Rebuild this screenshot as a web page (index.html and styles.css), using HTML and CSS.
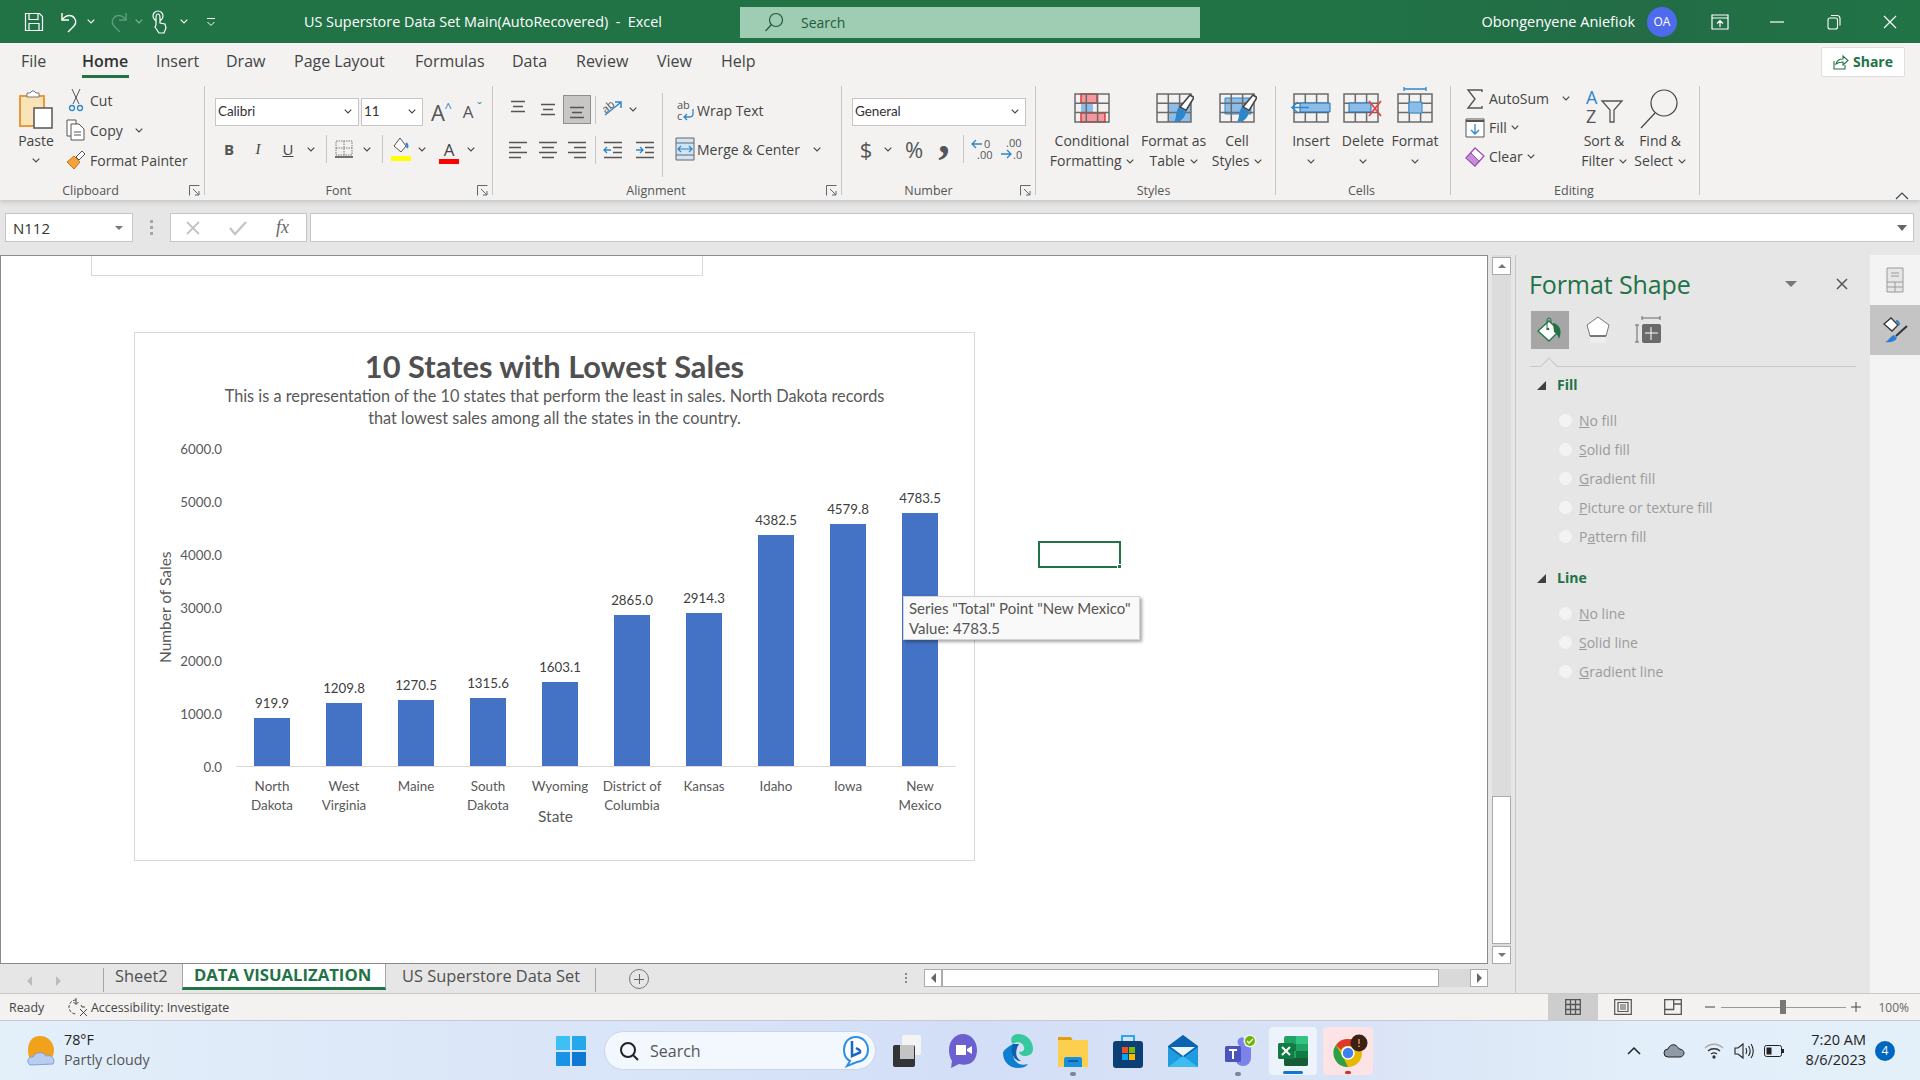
FILE: index.html
```html
<!DOCTYPE html>
<html lang="en">
<head>
  <meta charset="UTF-8" />
  <title>US Superstore Data Set Main(AutoRecovered) - Excel</title>
  <link rel="stylesheet" href="styles.css">
</head>
<body>

<svg class="sprite" width="0" height="0">
  <symbol id="chev" viewBox="0 0 8 5"><path d="M.7.7 4 4 7.3.7" fill="none" stroke="#444" stroke-width="1.1"/></symbol>
  <symbol id="chevw" viewBox="0 0 8 5"><path d="M.7.7 4 4 7.3.7" fill="none" stroke="#fff" stroke-width="1.1"/></symbol>
  <symbol id="launch" viewBox="0 0 11 11"><path d="M.5 10.5V.5h10M4 4l6 6M10 6v4H6" fill="none" stroke="#666"/></symbol>
  <symbol id="grid" viewBox="0 0 36 30"><path d="M1 1h34v28H1zM1 10.3h34M1 19.6h34M12.3 1v28M23.6 1v28" fill="none" stroke="#6b6b6b" stroke-width="1.5"/></symbol>
  <symbol id="brush" viewBox="0 0 20 30"><path d="M16 1l4 2.500-8 13-6-3.500z" fill="#fff" stroke="#444" stroke-width="1.6"/><path d="M5 13l7 4.500c-1 7-6 11-12 10 3-3 1-10 5-14.500z" fill="#2e86c9"/></symbol>
</svg>

<!-- Title bar -->
<header class="titlebar">
  <div class="qat">
    <span class="cell w28"><svg width="20" height="20" viewBox="0 0 20 20" fill="none" stroke="#fff" stroke-width="1.2"><path d="M1.5 1.5h14l3 3v14h-17z"/><path d="M5 1.5v6h9v-6M5 18.500v-7h10v7"/></svg></span>
    <span class="cell w28 ml8"><svg width="20" height="22" viewBox="0 0 20 22" fill="none" stroke="#fff" stroke-width="1.4"><path d="M2 2v7h7"/><path d="M2 9c3-4 7-5 10-4 4 2 5 7 2 10l-6 6"/></svg></span>
    <span class="cell w14"><svg class="chev"><use href="#chevw"/></svg></span>
    <span class="cell w28 ml6"><svg width="20" height="22" viewBox="0 0 20 22" fill="none" stroke="#5f9c7c" stroke-width="1.4"><path d="M18 2v7h-7"/><path d="M18 9c-3-4-7-5-10-4-4 2-5 7-2 10l6 6"/></svg></span>
    <span class="cell w14"><svg class="chev dim"><use href="#chevw"/></svg></span>
    <span class="cell w28"><svg width="16" height="24" viewBox="0 0 16 24" fill="none" stroke="#fff" stroke-width="1.2"><circle cx="6" cy="6" r="5"/><path d="M4 8c0-2 0-4 2-4s2 2 2 4v5l5 1 1 4-2 5H7l-4-6 1-2z" fill="#217346"/></svg></span>
    <span class="cell w20"><svg class="chev"><use href="#chevw"/></svg></span>
    <span class="cell w28 ml3"><svg width="10" height="10" viewBox="0 0 10 10" fill="none" stroke="#fff"><path d="M1 1.500h8M1.500 5 5 8.500 8.500 5"/></svg></span>
  </div>
  <div class="doc-title">US Superstore Data Set Main(AutoRecovered)&nbsp; -&nbsp; Excel</div>
  <div class="tell-me">
    <svg width="20" height="20" viewBox="0 0 20 20" fill="none" stroke="#1d5c3a" stroke-width="1.2"><circle cx="12" cy="8" r="6.500"/><path d="M7.500 12.500 1.500 19"/></svg>
    <span>Search</span>
  </div>
  <div class="user-name">Obongenyene Aniefiok</div>
  <div class="avatar">OA</div>
  <div class="winctl">
    <span class="cell w50"><svg width="18" height="16" viewBox="0 0 18 16" fill="none" stroke="#fff" stroke-width="1.200"><path d="M1 1h16v14H1zM1 4h16M9 13V7M6 9.500 9 6.500l3 3"/></svg></span>
    <span class="cell w64"><svg width="14" height="2" viewBox="0 0 14 2"><path d="M0 1h14" stroke="#fff" stroke-width="1.200"/></svg></span>
    <span class="cell w50"><svg width="14" height="16" viewBox="0 0 14 16" fill="none" stroke="#fff" stroke-width="1.100"><rect x="1" y="4" width="9.500" height="11" rx="2"/><path d="M4 1.500h6c2 0 3 1 3 3v7"/></svg></span>
    <span class="cell w61"><svg width="14" height="14" viewBox="0 0 14 14" stroke="#fff" stroke-width="1.200"><path d="M1 1l12 12M13 1 1 13"/></svg></span>
  </div>
</header>

<!-- Ribbon -->
<section class="ribbon">
  <nav class="tabs">
    <span class="tab t-file">File</span>
    <span class="tab t-home active">Home</span>
    <span class="tab t-insert">Insert</span>
    <span class="tab t-draw">Draw</span>
    <span class="tab t-layout">Page Layout</span>
    <span class="tab t-formulas">Formulas</span>
    <span class="tab t-data">Data</span>
    <span class="tab t-review">Review</span>
    <span class="tab t-view">View</span>
    <span class="tab t-help">Help</span>
    <span class="share">
      <svg width="16" height="16" viewBox="0 0 16 16" fill="none" stroke="#217346" stroke-width="1.100"><path d="M1 7v8h11v-4M3 10c1-4 4-5 7-5V2l5 4.500-5 4.500V8c-3 0-5 .5-7 2z"/></svg>
      Share
    </span>
  </nav>

  <div class="groups">
    <!-- Clipboard -->
    <div class="group g-clip">
      <div class="group-body">
        <div class="paste">
          <svg width="36" height="40" viewBox="0 0 36 40"><path d="M2 6h24v30H2z" fill="#fbe3b8" stroke="#e69a3a" stroke-width="2"/><path d="M9 7V3h3l2-2h2l2 2h3v4z" fill="#fff" stroke="#777"/><path d="M16 18h18v20H16z" fill="#fff" stroke="#555" stroke-width="1.500"/></svg>
          <span class="txt">Paste</span>
          <svg class="chev"><use href="#chev"/></svg>
        </div>
        <div class="clip-rows">
          <div class="row30"><span class="cell w20"><svg width="14" height="24" viewBox="0 0 14 24" fill="none" stroke="#555"><path d="M3 1l7 15M11 1 4 16"/><circle cx="3" cy="20" r="2.500" stroke="#2e86c9" stroke-width="1.300"/><circle cx="11" cy="20" r="2.500" stroke="#2e86c9" stroke-width="1.300"/></svg></span><span class="txt">Cut</span></div>
          <div class="row30"><span class="cell w20"><svg width="20" height="22" viewBox="0 0 20 22" fill="#fff" stroke="#555"><path d="M1 1h9v16H1z"/><path d="M5 5h8l5 5v11H5z"/><path d="M8 13h7M8 16h7" fill="none"/></svg></span><span class="txt">Copy</span><svg class="chev ml12"><use href="#chev"/></svg></div>
          <div class="row30"><span class="cell w20"><svg width="20" height="20" viewBox="0 0 20 20"><path d="M1 12l7-6 6 6-6 7z" fill="#f2a33a" stroke="#c9731c"/><path d="M10 7l6-6 3 3-6 6z" fill="#fff" stroke="#555"/></svg></span><span class="txt">Format Painter</span></div>
        </div>
      </div>
      <div class="group-label">Clipboard<svg class="launch"><use href="#launch"/></svg></div>
    </div>

    <!-- Font -->
    <div class="group g-font">
      <div class="group-body stack">
        <div class="row-top">
          <div class="select w144"><span class="cal">Calibri</span><svg class="chev"><use href="#chev"/></svg></div>
          <div class="select w62 ml2"><span class="cal">11</span><svg class="chev"><use href="#chev"/></svg></div>
          <span class="cell w30 big-a">A<i>^</i></span>
          <span class="cell w30 small-a">A<i>ˇ</i></span>
        </div>
        <div class="row-bottom">
          <span class="cell w28 fmt-b">B</span>
          <span class="cell w30 fmt-i">I</span>
          <span class="cell w30 fmt-u">U</span>
          <span class="cell w16"><svg class="chev"><use href="#chev"/></svg></span>
          <span class="vsep ml7"></span>
          <span class="cell w22 ml6"><svg width="18" height="18" viewBox="0 0 18 18" fill="none" stroke="#777" stroke-dasharray="1.500 1"><path d="M1 1h16v14H1zM9 1v14M1 8h16"/><path d="M0 17h18" stroke="#444" stroke-width="1.500" stroke-dasharray="none"/></svg></span>
          <span class="cell w24"><svg class="chev"><use href="#chev"/></svg></span>
          <span class="vsep ml3"></span>
          <span class="cell w22 ml7"><svg width="20" height="24" viewBox="0 0 20 24"><path d="M9 1l6 8-5 6-7-6z" fill="#fff" stroke="#555"/><path d="M15 6c2 2 2 3 1 5" fill="none" stroke="#2e86c9" stroke-width="2"/><path d="M0 19h20v5H0z" fill="#ffff00"/></svg></span>
          <span class="cell w20"><svg class="chev"><use href="#chev"/></svg></span>
          <span class="cell w22 ml6 color-a"><b>A</b><i></i></span>
          <span class="cell w22"><svg class="chev"><use href="#chev"/></svg></span>
        </div>
      </div>
      <div class="group-label">Font<svg class="launch"><use href="#launch"/></svg></div>
    </div>

    <!-- Alignment -->
    <div class="group g-align">
      <div class="group-body">
        <div class="al-left stack">
          <div class="row-top">
            <span class="cell w30"><svg class="lines"><path d="M3 1.500h14M5 6.500h10M3 11.500h14"/></svg></span>
            <span class="cell w30"><svg class="lines"><path d="M3 4.500h14M5 9.500h10M3 14.500h14"/></svg></span>
            <span class="cell w28 pressed"><svg class="lines"><path d="M3 7.500h14M5 12.500h10M3 17.500h14"/></svg></span>
            <span class="vsep ml4"></span>
            <span class="cell w22 ml6"><svg width="22" height="22" viewBox="0 0 22 22" fill="none"><path d="M3 16 18 4M13 3h6v6" stroke="#2e86c9" stroke-width="1.500"/><text x="1" y="12" class="ab" transform="rotate(-40 6 10)">ab</text></svg></span>
            <span class="cell w18"><svg class="chev"><use href="#chev"/></svg></span>
          </div>
          <div class="row-bottom">
            <span class="cell w30"><svg class="lines"><path d="M1 2.500h18M1 7.500h12M1 12.500h18M1 17.500h12"/></svg></span>
            <span class="cell w30"><svg class="lines"><path d="M1 2.500h18M4 7.500h12M1 12.500h18M4 17.500h12"/></svg></span>
            <span class="cell w28"><svg class="lines"><path d="M1 2.500h18M7 7.500h12M1 12.500h18M7 17.500h12"/></svg></span>
            <span class="vsep ml4"></span>
            <span class="cell w32 ml1"><svg class="lines"><path d="M1 2.500h18M10 7.500h9M10 12.500h9M1 17.500h18"/><path d="M8 10H1M4 7l-3 3 3 3" stroke="#2e86c9"/></svg></span>
            <span class="cell w32"><svg class="lines"><path d="M1 2.500h18M10 7.500h9M10 12.500h9M1 17.500h18"/><path d="M1 10h7M5 7l3 3-3 3" stroke="#2e86c9"/></svg></span>
          </div>
        </div>
        <div class="al-right">
          <div class="row-top">
            <span class="cell w24"><svg width="20" height="24" viewBox="0 0 20 24" fill="none"><text x="2" y="10" class="ab">ab</text><text x="2" y="21" class="ab">c</text><path d="M18 10v5c0 2-2 3-4 3H9M12 15l-3 3 3 3" stroke="#2e86c9" stroke-width="1.300"/></svg></span>
            <span class="txt">Wrap Text</span>
          </div>
          <div class="row-bottom">
            <span class="cell w24"><svg width="20" height="24" viewBox="0 0 20 24" fill="none"><path d="M1 1h18v22H1z" fill="#cfe4f5" stroke="#666"/><path d="M1 6h18M1 18h18" stroke="#666"/><path d="M3 12h14M6 9l-3 3 3 3M14 9l3 3-3 3" stroke="#2e86c9" stroke-width="1.200"/></svg></span>
            <span class="txt">Merge &amp; Center</span>
            <svg class="chev ml13"><use href="#chev"/></svg>
          </div>
        </div>
      </div>
      <div class="group-label">Alignment<svg class="launch"><use href="#launch"/></svg></div>
    </div>

    <!-- Number -->
    <div class="group g-number">
      <div class="group-body stack">
        <div class="row-top"><div class="select w174"><span class="cal">General</span><svg class="chev"><use href="#chev"/></svg></div></div>
        <div class="row-bottom">
          <span class="cell w28 sym">$</span>
          <span class="cell w16"><svg class="chev"><use href="#chev"/></svg></span>
          <span class="cell w36 sym">%</span>
          <span class="cell w24 sym comma">,</span>
          <span class="vsep ml7"></span>
          <span class="cell w30 ml4 dec"><svg width="24" height="24" viewBox="0 0 24 24" fill="none"><path d="M11 7H1M5 3 1 7l4 4" stroke="#2e86c9" stroke-width="1.300"/><text x="13" y="11" class="nm">0</text><text x="6" y="22" class="nm">.00</text></svg></span>
          <span class="cell w28"><svg width="24" height="24" viewBox="0 0 24 24" fill="none"><path d="M1 17h10M7 13l4 4-4 4" stroke="#2e86c9" stroke-width="1.300"/><text x="6" y="10" class="nm">.00</text><text x="13" y="22" class="nm">.0</text></svg></span>
        </div>
      </div>
      <div class="group-label">Number<svg class="launch"><use href="#launch"/></svg></div>
    </div>

    <!-- Styles -->
    <div class="group g-styles">
      <div class="group-body">
        <div class="big w92">
          <svg class="big-ic" viewBox="0 0 36 30"><path d="M7 1h16v9H7z" fill="#f5989d" stroke="#e03a3a" stroke-width="1.500"/><path d="M7 10h12v9H7z" fill="#8cbde8"/><path d="M7 20h24v9H7z" fill="#f5989d" stroke="#e03a3a" stroke-width="1.500"/><use href="#grid"/></svg>
          <span class="txt">Conditional</span>
          <span class="txt">Formatting <svg class="chev"><use href="#chev"/></svg></span>
        </div>
        <div class="big w71">
          <svg class="big-ic" viewBox="0 0 36 30"><path d="M12 10h23v19H12z" fill="#8cbde8"/><use href="#grid"/><use href="#brush" x="18" y="1" width="20" height="30"/></svg>
          <span class="txt">Format as</span>
          <span class="txt">Table <svg class="chev"><use href="#chev"/></svg></span>
        </div>
        <div class="big w56">
          <svg class="big-ic" viewBox="0 0 36 30"><path d="M6 5h26v16H6z" fill="#8cbde8" stroke="#2e86c9"/><use href="#grid"/><use href="#brush" x="18" y="1" width="20" height="30"/></svg>
          <span class="txt">Cell</span>
          <span class="txt">Styles <svg class="chev"><use href="#chev"/></svg></span>
        </div>
      </div>
      <div class="group-label">Styles</div>
    </div>

    <!-- Cells -->
    <div class="group g-cells">
      <div class="group-body">
        <div class="big w52">
          <svg class="big-ic" viewBox="0 0 40 30"><use href="#grid" x="2" width="36" height="30"/><path d="M9 10h30v9H9z" fill="#8cbde8" stroke="#1f6fb5"/><path d="M18 14.500H1M7 9l-6 5.500L7 20" fill="none" stroke="#2e86c9" stroke-width="1.500"/></svg>
          <span class="txt">Insert</span>
          <svg class="chev"><use href="#chev"/></svg>
        </div>
        <div class="big w52">
          <svg class="big-ic" viewBox="0 0 40 30"><use href="#grid" width="36" height="30"/><path d="M6 10h22v9H6z" fill="#8cbde8" stroke="#1f6fb5"/><path d="M26 8 38 23M38 8 26 23" stroke="#ea3f3f" stroke-width="1.700"/></svg>
          <span class="txt">Delete</span>
          <svg class="chev"><use href="#chev"/></svg>
        </div>
        <div class="big w52">
          <svg class="big-ic up" viewBox="0 0 36 36"><path d="M7 2h22M7 0v4M29 0v4" fill="none" stroke="#2e86c9" stroke-width="1.300"/><use href="#grid" y="6" width="36" height="30"/><path d="M12 15h13v11H12z" fill="#8cbde8" stroke="#2e86c9"/></svg>
          <span class="txt">Format</span>
          <svg class="chev"><use href="#chev"/></svg>
        </div>
      </div>
      <div class="group-label">Cells</div>
    </div>

    <!-- Editing -->
    <div class="group g-edit">
      <div class="group-body">
        <div class="edit-rows">
          <div class="row29"><span class="cell w20"><svg width="16" height="20" viewBox="0 0 16 20" fill="none" stroke="#555" stroke-width="1.400"><path d="M15 3V1H1l7 9-7 9h14v-2"/></svg></span><span class="txt">AutoSum</span><svg class="chev ml13"><use href="#chev"/></svg></div>
          <div class="row29"><span class="cell w20"><svg width="20" height="20" viewBox="0 0 20 20" fill="none"><path d="M1 1h18v18H1z" fill="#fff" stroke="#555"/><path d="M1 3h18" stroke="#555" stroke-width="2"/><path d="M10 6v10M6 12l4 4 4-4" stroke="#2e86c9" stroke-width="1.300"/></svg></span><span class="txt">Fill</span><svg class="chev ml4"><use href="#chev"/></svg></div>
          <div class="row29"><span class="cell w20"><svg width="20" height="20" viewBox="0 0 20 20"><path d="M1 11 10 1l9 8-9 10z" fill="#fff" stroke="#9b4fb0" stroke-width="1.300"/><path d="M1 11l5-5 8 8-4 5z" fill="#c98ed9" stroke="#9b4fb0"/></svg></span><span class="txt">Clear</span><svg class="chev ml4"><use href="#chev"/></svg></div>
        </div>
        <div class="big w60">
          <svg class="big-ic wide" viewBox="0 0 40 40" fill="none"><text x="2" y="15" class="az blue">A</text><text x="2" y="34" class="az">Z</text><path d="M18 12h20l-8 9v12h-4V21z" stroke="#555" stroke-width="1.300"/></svg>
          <span class="txt">Sort &amp;</span>
          <span class="txt">Filter <svg class="chev"><use href="#chev"/></svg></span>
        </div>
        <div class="big w52">
          <svg class="big-ic wide" viewBox="0 0 40 40" fill="none" stroke="#444" stroke-width="1.200"><circle cx="24" cy="14" r="13"/><path d="M15 24 1 39"/></svg>
          <span class="txt">Find &amp;</span>
          <span class="txt">Select <svg class="chev"><use href="#chev"/></svg></span>
        </div>
      </div>
      <div class="group-label">Editing</div>
    </div>

    <svg class="collapse" width="14" height="8" viewBox="0 0 14 8" fill="none" stroke="#444" stroke-width="1.200"><path d="M1 7l6-6 6 6"/></svg>
  </div>
</section>

<!-- Formula bar -->
<section class="formula-band">
  <div class="namebox"><span class="name-txt">N112</span><i class="tri-down"></i></div>
  <div class="fb-dots"><i></i><i></i><i></i></div>
  <div class="fb-buttons">
    <svg width="16" height="16" viewBox="0 0 16 16" stroke="#c4c4c4" stroke-width="1.800"><path d="M2 2l12 12M14 2 2 14"/></svg>
    <svg width="18" height="16" viewBox="0 0 18 16" fill="none" stroke="#c4c4c4" stroke-width="2.200"><path d="M1 8l5 6L17 2"/></svg>
    <span class="fx">fx</span>
  </div>
  <div class="fb-input"><i class="tri-down wide"></i></div>
</section>

<!-- Work area -->
<main class="work">
  <div class="book">
    <div class="sheet-row">
      <div class="sheet">
        <div class="old-shape"></div>

        <div class="chart">
          <div class="chart-title">10 States with Lowest Sales</div>
          <div class="chart-sub">This is a representation of the 10 states that perform the least in sales. North Dakota records<br>that lowest sales among all the states in the country.</div>
          <div class="plot-row">
            <div class="axis-title">Number of Sales</div>
            <div class="y-labels">
              <span>6000.0</span><span>5000.0</span><span>4000.0</span><span>3000.0</span><span>2000.0</span><span>1000.0</span><span>0.0</span>
            </div>
            <div class="plot">
              <div class="col"><span>919.9</span><i style="height:48px"></i></div>
              <div class="col"><span>1209.8</span><i style="height:63px"></i></div>
              <div class="col"><span>1270.5</span><i style="height:66px"></i></div>
              <div class="col"><span>1315.6</span><i style="height:68px"></i></div>
              <div class="col"><span>1603.1</span><i style="height:84px"></i></div>
              <div class="col"><span>2865.0</span><i style="height:151px"></i></div>
              <div class="col"><span>2914.3</span><i style="height:153px"></i></div>
              <div class="col"><span>4382.5</span><i style="height:231px"></i></div>
              <div class="col"><span>4579.8</span><i style="height:242px"></i></div>
              <div class="col"><span>4783.5</span><i style="height:253px"></i></div>
            </div>
          </div>
          <div class="cats">
            <span>North<br>Dakota</span><span>West<br>Virginia</span><span>Maine</span><span>South<br>Dakota</span><span>Wyoming</span><span>District of<br>Columbia</span><span>Kansas</span><span>Idaho</span><span>Iowa</span><span>New<br>Mexico</span>
          </div>
          <div class="x-title">State</div>
        </div>

        <div class="tooltip">Series "Total" Point "New Mexico"<br>Value: 4783.5</div>
        <div class="cell-sel"><i></i></div>
      </div>

      <div class="vscroll">
        <span class="sb-btn"><i class="tri-up"></i></span>
        <span class="sb-thumb"></span>
        <span class="sb-btn"><i class="tri-down"></i></span>
      </div>
    </div>

    <div class="sheet-tabs">
      <div class="nav-arrows"><i class="tri-left"></i><i class="tri-right"></i></div>
      <span class="stab first">Sheet2</span>
      <span class="stab current">DATA VISUALIZATION</span>
      <span class="stab last">US Superstore Data Set</span>
      <span class="add-sheet"></span>
      <div class="tab-dots"><i></i><i></i><i></i></div>
      <div class="hscroll">
        <span class="hs-btn"><i class="tri-left dark"></i></span>
        <span class="hs-thumb"></span>
        <span class="hs-btn"><i class="tri-right dark"></i></span>
      </div>
    </div>
  </div>

  <!-- Format Shape pane -->
  <aside class="pane">
    <div class="pane-head">
      <h2>Format Shape</h2>
      <i class="tri-down pane-menu"></i>
      <svg width="12" height="12" viewBox="0 0 12 12" stroke="#555" stroke-width="1.500"><path d="M1 1l10 10M11 1 1 11"/></svg>
    </div>
    <div class="pane-icons">
      <span class="pi on"><svg width="28" height="26" viewBox="0 0 28 26" fill="none"><path d="M13 4l10 10-10 10L2 14z" fill="#fff" stroke="#217346" stroke-width="1.300"/><path d="M11 13V3a2 2 0 0 1 4 0v3" stroke="#217346"/><circle cx="12" cy="12" r="1.300" fill="#217346"/><path d="M17 6c6 1 10 7 6 16-1-4-3-6-5-7z" fill="#217346"/></svg></span>
      <span class="pi"><svg width="26" height="28" viewBox="0 0 26 28" fill="none"><path d="M13 1l11 8-3 11H5L2 9z" fill="#fff" stroke="#777"/><path d="M5 20h16" stroke="#777" stroke-width="2"/><path d="M6 21l-1 6h16l-1-6z" fill="#eee"/></svg></span>
      <span class="pi"><svg width="28" height="28" viewBox="0 0 28 28" fill="none"><path d="M8 2h18M8 0v4M26 0v4M1 9h4M1 26h4M3 9v17" stroke="#666"/><rect x="8" y="8" width="19" height="19" rx="2" fill="#6a6a6a"/><path d="M17 11v13M11 17h13" stroke="#fff"/></svg></span>
    </div>
    <div class="pane-rule"><i></i></div>

    <div class="sec-head"><i class="tri-corner"></i>Fill</div>
    <div class="opts">
      <label class="opt"><i></i><span><u>N</u>o fill</span></label>
      <label class="opt"><i></i><span><u>S</u>olid fill</span></label>
      <label class="opt"><i></i><span><u>G</u>radient fill</span></label>
      <label class="opt"><i></i><span><u>P</u>icture or texture fill</span></label>
      <label class="opt"><i></i><span>P<u>a</u>ttern fill</span></label>
    </div>
    <div class="sec-head line"><i class="tri-corner"></i>Line</div>
    <div class="opts">
      <label class="opt"><i></i><span><u>N</u>o line</span></label>
      <label class="opt"><i></i><span><u>S</u>olid line</span></label>
      <label class="opt"><i></i><span><u>G</u>radient line</span></label>
    </div>
  </aside>

  <div class="pane-strip">
    <span class="ps-btn"><svg width="18" height="26" viewBox="0 0 18 26" fill="#e6e6e6" stroke="#9a9a9a"><path d="M1 1h16v24H1z"/><path d="M1 15h16M1 20h16M9 15v10M5 6h8M5 9h8" fill="none"/></svg></span>
    <span class="ps-btn on"><svg width="28" height="28" viewBox="0 0 28 28" fill="none"><path d="M10 2l7 7-6 6-8-7z" fill="#fff" stroke="#333" stroke-width="1.300"/><path d="M15 5c2 0 3 2 3 4" stroke="#2e86c9" stroke-width="2"/><path d="M26 10 15 20" stroke="#333" stroke-width="2"/><path d="M13 19l3 3c-2 4-7 5-12 4 4-1 5-6 9-7z" fill="#2e7cd6"/></svg></span>
  </div>
</main>

<!-- Status bar -->
<footer class="statusbar">
  <span class="ready">Ready</span>
  <svg width="20" height="20" viewBox="0 0 20 20" fill="none" stroke="#444"><path d="M8 3a7 7 0 1 0 0 14" stroke-dasharray="3 1.500"/><path d="M8 1v6M5.500 5 8 7.500 10.500 5M12 12l7 7M19 12l-7 7M13 8l1 2h3"/></svg>
  <span class="access">Accessibility: Investigate</span>
  <div class="views">
    <span class="view on"><svg width="16" height="16" viewBox="0 0 16 16" fill="none" stroke="#555" stroke-width="1.300"><path d="M.7.7h14.600v14.600H.7zM.7 5.500h14.600M.7 10.500h14.600M5.500.7v14.600M10.500.7v14.600"/></svg></span>
    <span class="view"><svg width="18" height="16" viewBox="0 0 18 16" fill="none" stroke="#555" stroke-width="1.200"><path d="M.7.7h16.600v14.600H.7zM4 3.500h10v9H4zM6 6h6M6 8h6M6 10h6"/></svg></span>
    <span class="view"><svg width="18" height="16" viewBox="0 0 18 16" fill="none" stroke="#555" stroke-width="1.300"><path d="M.7.7h16.600v14.600H.7zM.7 10.500h9V.7M10 5h7"/></svg></span>
  </div>
  <div class="zoom">
    <svg width="10" height="2" viewBox="0 0 10 2"><path d="M0 1h10" stroke="#444"/></svg>
    <div class="slider"><i></i></div>
    <svg width="10" height="10" viewBox="0 0 10 10"><path d="M0 5h10M5 0v10" stroke="#444"/></svg>
    <span class="zoom-pct">100%</span>
  </div>
</footer>

<!-- Windows taskbar -->
<div class="taskbar">
  <div class="weather">
    <svg width="32" height="32" viewBox="0 0 32 32"><path d="M15 1C7 1 3 7 3 15c0 6 2 11 6 14h12C27 26 29 20 29 14 28 7 23 1 15 1z" fill="#f2a11c"/><path d="M4 29c-4-3-2-9 3-8 2-5 10-6 13-1 5-2 10 3 7 8z" transform="translate(1 1)" fill="#b9cdf0" stroke="#7fa0dc"/></svg>
    <div class="w-text"><div class="w-temp">78°F</div><div class="w-desc">Partly cloudy</div></div>
  </div>
  <svg class="win-logo" width="30" height="30" viewBox="0 0 30 30"><path d="M0 1a1 1 0 0 1 1-1h13v14H0z" fill="#3cc0f5"/><path d="M16 0h13a1 1 0 0 1 1 1v13H16z" fill="#25a7ec"/><path d="M0 16h14v14H1a1 1 0 0 1-1-1z" fill="#1a93e6"/><path d="M16 16h14v13a1 1 0 0 1-1 1H16z" fill="#0f78d4"/></svg>
  <div class="tb-search">
    <svg width="20" height="20" viewBox="0 0 20 20" fill="none" stroke="#222" stroke-width="2"><circle cx="9" cy="9" r="7"/><path d="M14 14l5 5"/></svg>
    <span>Search</span>
    <svg class="bing" width="26" height="32" viewBox="0 0 26 32" fill="none"><path d="M13 2C5 2 1 8 1 15c0 5 2 9 6 11l-3 5 10-4c7-1 11-6 11-12C25 8 20 2 13 2z" fill="#fff" stroke="#2f8fe0" stroke-width="2"/><path d="M9 6v15l8-3.500c1-2-1-3-4-4.500" stroke="#1769c9" stroke-width="2.500"/></svg>
  </div>
  <div class="tb-apps">
    <span class="app"><svg width="30" height="32" viewBox="0 0 30 32"><rect x="9" y="0" width="19" height="20" rx="2" fill="#f4f4f4"/><rect x="0" y="10" width="22" height="22" rx="2" fill="#2a2a2a" fill-opacity=".95"/><rect x="7" y="10" width="14" height="14" fill="#c4c4c4"/></svg></span>
    <span class="app"><svg width="30" height="36" viewBox="0 0 30 36"><path d="M15 1C7 1 1 8 1 17c0 6 2 9 3 11l-1 7 8-4c13 3 18-5 18-14C29 8 23 1 15 1z" fill="#6c5fcf"/><path d="M8 12h10v10H8zM19 16l5-3v8l-5-3z" fill="#fff"/></svg></span>
    <span class="app"><svg width="30" height="34" viewBox="0 0 30 34"><path d="M15 0c8 0 15 6 15 15 0 5-4 7-8 7-3 0-6-2-6-4 4 0 6-2 5-5-1-5-7-6-11-3C6 6 9 0 15 0z" fill="#37c99e"/><path d="M10 10C4 13 0 17 0 19c0 9 7 15 15 15 4 0 8-1 10-4-9 3-15-3-15-10z" fill="#0c7fd1"/><path d="M10 10c-3 5-1 17 8 17-6-3-6-11-2-17z" fill="#0c5fb0"/></svg></span>
    <span class="app"><svg width="30" height="32" viewBox="0 0 30 32"><path d="M0 2h13l2 4H0z" fill="#e0a00b"/><path d="M0 5h30v27H0z" fill="#fcd04e"/><path d="M8 22h14a2 2 0 0 1 2 2v8H6v-8a2 2 0 0 1 2-2z" fill="#1a8fdc"/><path d="M10 26h10" stroke="#0b5fa5" stroke-width="2"/></svg></span>
    <span class="app"><svg width="30" height="34" viewBox="0 0 30 34"><path d="M9 8V2h12v6" fill="none" stroke="#28a8ea" stroke-width="2"/><rect y="7" width="30" height="27" rx="3" fill="#0c3f75"/><rect x="9" y="13" width="6" height="6" fill="#f25022"/><rect x="16" y="13" width="6" height="6" fill="#7fba00"/><rect x="9" y="20" width="6" height="6" fill="#00a4ef"/><rect x="16" y="20" width="6" height="6" fill="#ffb900"/></svg></span>
    <span class="app"><svg width="30" height="32" viewBox="0 0 30 32"><path d="M0 12 15 0l15 12v20H0z" fill="#1f9be0"/><path d="M0 12l15 11 15-11v-1L15 0 0 11z" fill="#0c64b0"/><path d="M3 12h24L15 21z" fill="#eaf6fd"/><path d="M0 32l15-11 15 11z" fill="#3dbcf0"/></svg></span>
    <span class="app teams"><svg width="32" height="34" viewBox="0 0 32 34"><circle cx="17" cy="8" r="4.500" fill="#7b83eb"/><path d="M10 12h16v12a8 8 0 0 1-16 0z" fill="#7b83eb"/><rect x="0" y="12" width="16" height="16" rx="1.500" fill="#4b53bc"/><path d="M4 16h8M8 16v9" stroke="#fff" stroke-width="2"/><circle cx="25" cy="7" r="6.500" fill="#f2f2f2"/><circle cx="25" cy="7" r="5" fill="#6bb700"/><path d="M22 7l2 2 4-4" fill="none" stroke="#fff" stroke-width="1.300"/></svg></span>
    <span class="app on-x"><svg width="30" height="30" viewBox="0 0 30 30"><rect x="6" width="24" height="30" rx="2" fill="#21a366"/><path d="M18 0h10a2 2 0 0 1 2 2v6H18z" fill="#33c481"/><path d="M6 8h12v7H6z" fill="#107c41"/><path d="M18 15h12v7H18z" fill="#107c41"/><path d="M6 22h24v6a2 2 0 0 1-2 2H8a2 2 0 0 1-2-2z" fill="#185c37"/><rect y="7" width="16" height="16" rx="1.500" fill="#107c41"/><path d="M4 11l8 8M12 11l-8 8" stroke="#fff" stroke-width="2"/></svg><i class="run blue"></i></span>
    <span class="app on-c"><svg width="36" height="36" viewBox="0 0 36 36"><circle cx="16" cy="20" r="14" fill="#e6b800"/><path d="M16 6a14 14 0 0 1 12 7H16a7 7 0 0 0-7 4L4 12A14 14 0 0 1 16 6z" fill="#e0372f"/><path d="M4 12l7 12 5 10A14 14 0 0 1 4 12z" fill="#2e9e47"/><circle cx="16" cy="20" r="6" fill="#3f80f0" stroke="#fff" stroke-width="1.500"/><circle cx="27" cy="10" r="8.500" fill="#3a2114"/><path d="M27 6v5M27 12.500v1.500" stroke="#d9924e" stroke-width="1.500"/></svg><i class="run red"></i></span>
    <i class="dot d-folder"></i>
    <i class="dot d-teams"></i>
  </div>
  <div class="tray">
    <span class="cell w30"><svg width="14" height="8" viewBox="0 0 14 8" fill="none" stroke="#222" stroke-width="1.500"><path d="M1 7l6-6 6 6"/></svg></span>
    <span class="cell w40 ml5"><svg width="22" height="14" viewBox="0 0 22 14"><path d="M5 13a4 4 0 0 1 0-8c1-3 4-5 7-4 2 1 3 2 4 4 3 0 5 2 5 4s-2 4-4 4z" fill="#8f9aa8" stroke="#222"/></svg></span>
    <span class="cell w30 ml5"><svg width="20" height="16" viewBox="0 0 20 16" fill="none" stroke="#333" stroke-width="1.300"><path d="M1 5c5-5 13-5 18 0" stroke="#aaa"/><path d="M4 8c3-3 9-3 12 0M7 11c2-1.500 4-1.500 6 0"/><circle cx="10" cy="14" r="1" fill="#222"/></svg></span>
    <span class="cell w30"><svg width="20" height="16" viewBox="0 0 20 16" fill="none" stroke="#222" stroke-width="1.100"><path d="M1 5h3l5-4v14l-5-4H1z"/><path d="M12 5c1 2 1 4 0 6M14.500 3c2 3 2 7 0 10M17 1c3 4 3 10 0 14"/></svg></span>
    <span class="cell w30"><svg width="20" height="12" viewBox="0 0 20 12"><rect x=".5" y=".5" width="17" height="11" rx="2" fill="none" stroke="#222"/><rect x="2.500" y="2.500" width="5" height="7" fill="#222"/><path d="M18 4h2v4h-2z" fill="#222"/></svg></span>
    <div class="clock"><div>7:20 AM</div><div>8/6/2023</div></div>
    <span class="badge">4</span>
  </div>
</div>

</body>
</html>
```

FILE: styles.css
```css
* {
  box-sizing: border-box;
}

html, body {
  margin: 0;
  width: 1920px;
  height: 1080px;
  overflow: hidden;
}

body {
  font-family: "Open Sans", Arial, sans-serif;
  font-size: 14px;
  color: #444;
  background: #e6e6e6;
}

.sprite {
  position: absolute;
}

i {
  font-style: normal;
  display: block;
}

svg {
  display: block;
  overflow: visible;
}

.chev {
  width: 8px;
  height: 5px;
}

.chev.dim {
  opacity: .45;
}

.cell {
  display: flex;
  align-items: center;
  justify-content: center;
  flex: none;
  height: 100%;
}

/* width helpers for toolbar cells */
.w14 { width: 14px; }
.w16 { width: 16px; }
.w18 { width: 18px; }
.w20 { width: 20px; }
.w22 { width: 22px; }
.w24 { width: 24px; }
.w28 { width: 28px; }
.w30 { width: 30px; }
.w32 { width: 32px; }
.w36 { width: 36px; }
.w40 { width: 40px; }
.w50 { width: 50px; }
.w52 { width: 52px; }
.w56 { width: 56px; }
.w60 { width: 60px; }
.w61 { width: 61px; }
.w62 { width: 62px; }
.w64 { width: 64px; }
.w71 { width: 71px; }
.w92 { width: 92px; }
.w144 { width: 144px; }
.w174 { width: 174px; }
.ml1 { margin-left: 1px; }
.ml2 { margin-left: 2px; }
.ml3 { margin-left: 3px; }
.ml4 { margin-left: 4px; }
.ml5 { margin-left: 5px; }
.ml6 { margin-left: 6px; }
.ml7 { margin-left: 7px; }
.ml8 { margin-left: 8px; }
.ml12 { margin-left: 12px; }
.ml13 { margin-left: 13px; }

/* title bar */
.titlebar {
  height: 43px;
  background: linear-gradient(90deg, #217346 70%, #236c46 85%, #217346 100%);
  color: #fff;
  display: flex;
  align-items: center;
}

.qat {
  display: flex;
  height: 100%;
  padding-left: 20px;
  width: 304px;
}

.doc-title {
  width: 436px;
  font-size: 14.400px;
  white-space: nowrap;
}

.tell-me {
  width: 460px;
  height: 31px;
  margin-top: 1px;
  background: #9fcdb3;
  color: #1d5c3a;
  display: flex;
  align-items: center;
  padding-left: 24px;
  gap: 17px;
}

.user-name {
  margin-left: auto;
  font-size: 14.500px;
}

.avatar {
  width: 30px;
  height: 30px;
  margin-left: 12px;
  border-radius: 50%;
  background: #4f6bed;
  font-size: 12px;
  display: flex;
  align-items: center;
  justify-content: center;
}

.winctl {
  display: flex;
  height: 100%;
  margin-left: 18px;
}

/* ribbon */
.ribbon {
  height: 157px;
  background: #f3f2f1;
  position: relative;
  box-shadow: 0 2px 5px rgba(0, 0, 0, .15);
}

.tabs {
  height: 37px;
  position: relative;
  display: flex;
  align-items: center;
  font-size: 16px;
  color: #444;
}

.tab {
  flex: none;
  line-height: 37px;
}

.t-file { margin-left: 21px; width: 61px; }
.t-home { width: 74px; position: relative; font-weight: 600; color: #333; }
.t-insert { width: 70px; }
.t-draw { width: 68px; }
.t-layout { width: 121px; }
.t-formulas { width: 97px; }
.t-data { width: 64px; }
.t-review { width: 81px; }
.t-view { width: 64px; }
.t-help { width: 60px; }

.tab.active::after {
  content: "";
  position: absolute;
  left: 0;
  width: 47px;
  bottom: 2px;
  height: 3px;
  background: #217346;
}

.share {
  margin-left: auto;
  margin-right: 15px;
  width: 84px;
  height: 30px;
  background: #fff;
  border: 1px solid #e1dfdd;
  border-radius: 2px;
  color: #217346;
  font-weight: 700;
  font-size: 14px;
  display: flex;
  align-items: center;
  justify-content: center;
  gap: 4px;
}

.groups {
  display: flex;
  padding-top: 6px;
  position: relative;
}

.group {
  flex: none;
  height: 109px;
  border-right: 1px solid #c8c6c4;
  display: flex;
  flex-direction: column;
}

.group-body {
  height: 95px;
  display: flex;
}

.group-label {
  height: 14px;
  line-height: 19px;
  font-size: 12.500px;
  text-align: center;
  position: relative;
  color: #555;
}

.launch {
  position: absolute;
  width: 11px;
  height: 11px;
  right: 4px;
  top: 4px;
}

.g-clip { width: 205px; }
.g-clip .group-label { padding-right: 23px; }
.g-font { width: 288px; padding-left: 10px; }
.g-font .group-label { padding-right: 30px; }
.g-align { width: 349px; padding-left: 10px; }
.g-align .group-label { padding-right: 32px; }
.g-number { width: 194px; padding-left: 10px; }
.g-number .group-label { padding-right: 30px; }
.g-styles { width: 240px; padding-left: 10px; }
.g-styles .group-label { padding-right: 14px; }
.g-cells { width: 175px; padding-left: 9px; }
.g-cells .group-label { padding-right: 12px; }
.g-edit { width: 249px; padding-left: 10px; }
.g-edit .group-label { padding-right: 12px; }

.txt {
  white-space: nowrap;
  color: #444;
}

.cal {
  font-family: Lato, "Liberation Sans", sans-serif;
  font-size: 13.500px;
  letter-spacing: -.1px;
  color: #333;
  padding-bottom: 2px;
}

.name-txt {
  font-size: 15px;
  color: #333;
}

.stack {
  flex-direction: column;
  padding-top: 11px;
}

.row-top {
  height: 29px;
  display: flex;
  align-items: center;
}

.row-bottom {
  height: 30px;
  margin-top: 8px;
  display: flex;
  align-items: center;
}

.row30 {
  height: 30px;
  display: flex;
  align-items: center;
}

.row29 {
  height: 29px;
  display: flex;
  align-items: center;
}

.paste {
  width: 72px;
  display: flex;
  flex-direction: column;
  align-items: center;
  padding-top: 4px;
}

.paste .txt {
  margin-top: 1px;
}

.paste .chev {
  margin-top: 8px;
}

.clip-rows {
  margin-left: -6px;
  margin-top: -1px;
}

.clip-rows .txt {
  margin-left: 4px;
}

.select {
  height: 28px;
  background: #fff;
  border: 1px solid #c8c6c4;
  display: flex;
  align-items: center;
  justify-content: space-between;
  padding: 0 6px 0 2px;
}

.big-a, .small-a {
  font-family: "Open Sans", sans-serif;
  position: relative;
  color: #555;
}

.big-a {
  font-size: 22px;
}

.small-a {
  font-size: 17px;
}

.big-a i, .small-a i {
  position: absolute;
  font-size: 13px;
  color: #2e86c9;
  top: 1px;
  right: 1px;
}

.fmt-b {
  font-weight: 700;
  font-size: 15px;
  color: #555;
}

.fmt-i {
  font-style: italic;
  font-size: 15px;
  font-family: "Liberation Serif", serif;
}

.fmt-u {
  font-size: 15px;
  text-decoration: underline;
}

.vsep {
  flex: none;
  width: 1px;
  height: 28px;
  background: #c8c6c4;
}

.color-a {
  flex-direction: column;
  justify-content: flex-end;
}

.color-a b {
  font-weight: 400;
  font-size: 17px;
  line-height: 19px;
}

.color-a i {
  width: 20px;
  height: 5px;
  background: #ff0000;
}

.al-left {
  width: 160px;
  border-right: 1px solid #c8c6c4;
  height: 84px;
  margin-top: 7px;
  padding-top: 2px;
  display: flex;
  flex-direction: column;
}

.al-left .row-bottom {
  margin-top: 11px;
}

.al-right {
  padding-left: 10px;
  padding-top: 10px;
}

.al-right .row-bottom {
  margin-top: 9px;
}

.pressed {
  background: #c8c6c4;
  border: 1px solid #8f8f8f;
  height: 29px;
}

.lines {
  width: 20px;
  height: 20px;
  fill: none;
  stroke: #555;
  stroke-width: 1.300;
}

.ab {
  font-family: "Open Sans", sans-serif;
  font-size: 11px;
  fill: #555;
  stroke: none;
}

.nm {
  font-family: "Open Sans", sans-serif;
  font-size: 11px;
  fill: #555;
  stroke: none;
}

.az {
  font-family: "Open Sans", sans-serif;
  font-size: 18px;
  fill: #555;
  stroke: none;
}

.az.blue {
  fill: #2e86c9;
}

.sym {
  font-size: 22px;
  color: #555;
}

.comma {
  font-family: "Liberation Serif", serif;
  font-weight: 700;
  font-size: 46px;
  line-height: 0;
  padding-bottom: 22px;
}

.big {
  display: flex;
  flex-direction: column;
  align-items: center;
  flex: none;
  line-height: 20px;
}

.big > .txt .chev {
  display: inline-block;
  vertical-align: 2px;
  margin-left: 1px;
}

.big > .chev {
  margin-top: 8px;
}

.big-ic {
  width: 40px;
  height: 30px;
  margin-top: 7px;
  margin-bottom: 8px;
}

.big-ic.up {
  height: 36px;
  margin-top: 1px;
}

.big-ic.wide {
  height: 40px;
  margin-top: 3px;
  margin-bottom: 2px;
}

.edit-rows {
  width: 113px;
  margin-top: -2px;
  padding-left: 4px;
}

.edit-rows .txt {
  margin-left: 4px;
}

.collapse {
  position: absolute;
  left: 1895px;
  top: 112px;
}

/* formula bar */
.formula-band {
  height: 55px;
  padding: 13px 6px 13px 5px;
  display: flex;
}

.namebox {
  width: 128px;
  background: #fff;
  border: 1px solid #c8c6c4;
  display: flex;
  align-items: center;
  justify-content: space-between;
  padding: 0 9px 0 7px;
}

.fb-dots {
  width: 37px;
  display: flex;
  flex-direction: column;
  align-items: center;
  justify-content: center;
  gap: 3px;
}

.fb-dots i {
  width: 3px;
  height: 3px;
  background: #a6a6a6;
}

.fb-buttons {
  width: 137px;
  background: #fff;
  border: 1px solid #c8c6c4;
  display: flex;
  align-items: center;
  padding-left: 14px;
  gap: 28px;
}

.fx {
  font-family: "Liberation Serif", serif;
  font-style: italic;
  font-size: 18px;
  color: #666;
  margin-left: 1px;
}

.fb-input {
  flex: 1;
  margin-left: 3px;
  background: #fff;
  border: 1px solid #c8c6c4;
  display: flex;
  align-items: center;
  justify-content: flex-end;
  padding-right: 6px;
}

.tri-down, .tri-up, .tri-left, .tri-right, .tri-corner {
  width: 0;
  height: 0;
}

.tri-down {
  border-left: 4px solid transparent;
  border-right: 4px solid transparent;
  border-top: 4px solid #777;
}

.tri-down.wide {
  border-left-width: 5px;
  border-right-width: 5px;
  border-top-width: 6px;
  border-top-color: #666;
}

.tri-up {
  border-left: 4px solid transparent;
  border-right: 4px solid transparent;
  border-bottom: 4px solid #777;
}

.tri-left {
  border-top: 5px solid transparent;
  border-bottom: 5px solid transparent;
  border-right: 5px solid #bdbdbd;
}

.tri-right {
  border-top: 5px solid transparent;
  border-bottom: 5px solid transparent;
  border-left: 5px solid #bdbdbd;
}

.tri-left.dark { border-right-color: #666; }
.tri-right.dark { border-left-color: #666; }

/* work area */
.work {
  height: 738px;
  display: flex;
}

.book {
  width: 1515px;
  display: flex;
  flex-direction: column;
}

.sheet-row {
  height: 709px;
  display: flex;
}

.sheet {
  width: 1488px;
  position: relative;
  background: #fff;
  border: 1px solid #8a8a8a;
  overflow: hidden;
}

.old-shape {
  position: absolute;
  left: 90px;
  top: -1px;
  width: 612px;
  height: 21px;
  border: 1px solid #d9d9d9;
}

.chart {
  position: absolute;
  left: 133px;
  top: 76px;
  width: 841px;
  height: 529px;
  border: 1px solid #d9d9d9;
  background: #fff;
  font-family: Lato, "Liberation Sans", sans-serif;
  color: #404040;
}

.chart-title {
  padding-top: 16px;
  font-size: 30.800px;
  line-height: 36px;
  font-weight: 700;
  text-align: center;
  color: #505050;
}

.chart-sub {
  font-size: 16.300px;
  line-height: 22px;
  text-align: center;
  color: #595959;
}

.plot-row {
  margin-top: 20px;
  height: 318px;
  display: flex;
  padding-left: 20px;
}

.axis-title {
  width: 20px;
  writing-mode: vertical-rl;
  transform: rotate(180deg);
  text-align: center;
  height: 316px;
  font-size: 15.500px;
  color: #595959;
  line-height: 20px;
}

.y-labels {
  width: 47px;
  height: 318px;
  display: flex;
  flex-direction: column;
  justify-content: space-between;
  align-items: flex-end;
  font-size: 13.300px;
  color: #595959;
}

.y-labels span {
  height: 0;
  line-height: 0;
}

.plot {
  width: 720px;
  margin-left: 14px;
  height: 318px;
  border-bottom: 1px solid #d9d9d9;
  display: flex;
}

.col {
  flex: 1;
  display: flex;
  flex-direction: column;
  align-items: center;
  justify-content: flex-end;
  font-size: 13.300px;
}

.col span {
  line-height: 16px;
  margin-bottom: 7px;
}

.col i {
  width: 36px;
  background: #4472c4;
}

.cats {
  margin-top: 10px;
  padding-left: 101px;
  display: flex;
  height: 38px;
  font-size: 13.400px;
  line-height: 19px;
  color: #595959;
  text-align: center;
}

.cats span {
  width: 72px;
  flex: none;
}

.x-title {
  margin-top: -8px;
  padding-left: 2px;
  text-align: center;
  font-size: 15.500px;
  line-height: 18px;
  color: #595959;
}

.tooltip {
  position: absolute;
  left: 902px;
  top: 340px;
  width: 237px;
  height: 44px;
  padding: 1px 5px;
  background: #f9f9f9;
  border: 1px solid #d4d4d4;
  box-shadow: 2px 2px 3px rgba(0, 0, 0, .35);
  font-family: Lato, "Liberation Sans", sans-serif;
  font-size: 15px;
  line-height: 20px;
  color: #555;
}

.cell-sel {
  position: absolute;
  left: 1037px;
  top: 285px;
  width: 83px;
  height: 27px;
  border: 2px solid #217346;
}

.cell-sel i {
  position: absolute;
  right: -3px;
  bottom: -3px;
  width: 5px;
  height: 5px;
  background: #217346;
  border: 1px solid #fff;
}

.vscroll {
  width: 27px;
  padding: 2px 4px 0;
  display: flex;
  flex-direction: column;
  position: relative;
  background: linear-gradient(#dcdcdc, #dcdcdc) no-repeat 4px 0 / 19px 100%;
}

.sb-btn {
  height: 18px;
  background: #fff;
  border: 1px solid #ababab;
  display: flex;
  align-items: center;
  justify-content: center;
  flex: none;
}

.sb-thumb {
  height: 148px;
  margin-top: auto;
  margin-bottom: 2px;
  background: #fff;
  border: 1px solid #ababab;
}

.sheet-tabs {
  height: 29px;
  display: flex;
  align-items: flex-start;
  font-size: 16.400px;
  background: #e6e6e6;
}

.nav-arrows {
  width: 104px;
  height: 24px;
  padding: 9px 0 0 27px;
  display: flex;
  gap: 24px;
  border-right: 1px solid #a6a6a6;
  margin-top: 4px;
}

.nav-arrows i {
  margin-top: -1px;
}

.stab {
  flex: none;
  height: 26px;
  line-height: 23px;
  padding-left: 11px;
  color: #505050;
}

.stab.first {
  width: 78px;
}

.stab.current {
  width: 204px;
  background: #fff;
  color: #217346;
  font-weight: 700;
  border: 1px solid #a6a6a6;
  border-top: none;
  border-bottom: 3px solid #217346;
  padding-left: 11px;
  font-size: 16.700px;
  height: 27px;
  margin-top: -1px;
  line-height: 24px;
  white-space: nowrap;
}

.stab.last {
  width: 210px;
  padding-left: 16px;
  height: 24px;
  margin-top: 4px;
  line-height: 15px;
  border-right: 1px solid #a6a6a6;
  white-space: nowrap;
}

.add-sheet {
  flex: none;
  width: 20px;
  height: 20px;
  margin: 5px 0 0 33px;
  border: 1px solid #777;
  border-radius: 50%;
  background:
    linear-gradient(#666, #666) center / 10px 1px no-repeat,
    linear-gradient(#666, #666) center / 1px 10px no-repeat;
}

.tab-dots {
  margin-left: 256px;
  margin-top: 9px;
  display: flex;
  flex-direction: column;
  gap: 2px;
}

.tab-dots i {
  width: 2px;
  height: 2px;
  background: #888;
}

.hscroll {
  width: 564px;
  height: 18px;
  margin-left: 17px;
  margin-top: 5px;
  display: flex;
  background: #d9d9d9;
}

.hs-btn {
  width: 18px;
  background: #fff;
  border: 1px solid #ababab;
  display: flex;
  align-items: center;
  justify-content: center;
  flex: none;
}

.hs-thumb {
  width: 497px;
  background: #fff;
  border: 1px solid #ababab;
  margin-right: auto;
}

/* format shape pane */
.pane {
  width: 355px;
  border-left: 1px solid #c8c8c8;
  background: #e6e6e6;
}

.pane-head {
  height: 56px;
  padding: 2px 22px 0 13px;
  display: flex;
  align-items: center;
}

.pane-head h2 {
  margin: 0;
  font-weight: 400;
  font-size: 25px;
  color: #217346;
  font-family: "Open Sans", sans-serif;
  letter-spacing: -.1px;
}

.pane-menu {
  margin-left: auto;
  margin-right: 39px;
  border-left-width: 6px;
  border-right-width: 6px;
  border-top-width: 6px;
}

.pane-icons {
  display: flex;
  padding-left: 15px;
  gap: 1px;
}

.pi {
  width: 38px;
  height: 38px;
  display: flex;
  align-items: center;
  justify-content: center;
  margin-right: 11px;
}

.pi.on {
  background: #a6a6a6;
  margin-right: 9px;
}

.pane-rule {
  margin: 17px 0 0 14px;
  width: 326px;
  height: 1px;
  background: #c8c8c8;
  position: relative;
}

.pane-rule i {
  position: absolute;
  left: 13px;
  top: -6px;
  width: 12px;
  height: 12px;
  background: #e6e6e6;
  border-left: 1px solid #c8c8c8;
  border-top: 1px solid #c8c8c8;
  transform: rotate(45deg);
}

.sec-head {
  margin-top: 8px;
  height: 20px;
  line-height: 20px;
  padding-left: 21px;
  display: flex;
  align-items: center;
  font-size: 14px;
  font-weight: 700;
  color: #217346;
}

.sec-head.line {
  margin-top: 17px;
}

.tri-corner {
  border-bottom: 9px solid #404040;
  border-left: 9px solid transparent;
  margin-right: 11px;
}

.opts {
  padding-top: 11px;
}

.opt {
  height: 29px;
  display: flex;
  align-items: center;
  padding-left: 43px;
  font-size: 14px;
  color: #9b9b9b;
}

.opt i {
  width: 13px;
  height: 13px;
  margin-right: 7px;
  border-radius: 50%;
  background: #f3f3f3;
}

.pane-strip {
  width: 50px;
  background: #f3f3f3;
  display: flex;
  flex-direction: column;
}

.ps-btn {
  width: 50px;
  height: 50px;
  display: flex;
  align-items: center;
  justify-content: center;
}

.ps-btn.on {
  background: #c4c4c4;
}

/* status bar */
.statusbar {
  height: 27px;
  background: #f3f2f1;
  border-top: 1px solid #c8c8c8;
  display: flex;
  align-items: center;
  font-size: 12.400px;
  padding-left: 9px;
  color: #444;
}

.ready {
  width: 59px;
}

.access {
  margin-left: 3px;
}

.views {
  margin-left: auto;
  display: flex;
  height: 100%;
}

.view {
  width: 50px;
  display: flex;
  align-items: center;
  justify-content: center;
}

.view.on {
  background: #cdcdcd;
}

.zoom {
  width: 222px;
  display: flex;
  align-items: center;
  padding-right: 11px;
}

.zoom svg {
  margin-left: 7px;
}

.zoom .slider + svg {
  margin-left: 5px;
}

.slider {
  width: 125px;
  height: 1px;
  margin-left: 6px;
  background: #999;
  position: relative;
}

.slider i {
  position: absolute;
  left: 59px;
  top: -7px;
  width: 6px;
  height: 14px;
  background: #777;
}

.zoom-pct {
  margin-left: auto;
  color: #666;
  font-size: 12px;
}

/* taskbar */
.taskbar {
  height: 60px;
  border-top: 1px solid #c4c9d4;
  background: linear-gradient(90deg, #e3eff9 0%, #dbe7f8 25%, #d3dff7 50%, #d9e3f6 70%, #e2eef9 85%, #e3eff9 100%);
  display: flex;
  align-items: center;
  position: relative;
  font-size: 14.300px;
  color: #222;
}

.weather {
  width: 556px;
  padding-left: 25px;
  display: flex;
  align-items: center;
  gap: 7px;
}

.w-text {
  margin-bottom: 2px;
}

.w-temp {
  line-height: 20px;
}

.w-desc {
  line-height: 20px;
  color: #555;
}

.tb-search {
  width: 272px;
  height: 39px;
  margin-left: 18px;
  border-radius: 20px;
  background: #f3f7fe;
  border: 1px solid #ccd5e6;
  display: flex;
  align-items: center;
  padding-left: 14px;
  gap: 11px;
  color: #555;
  font-size: 16px;
}

.bing {
  margin-left: auto;
  margin-right: 6px;
}

.tb-apps {
  display: flex;
  margin-left: 4px;
  position: relative;
  height: 100%;
  align-items: center;
}

.app {
  width: 55px;
  height: 48px;
  display: flex;
  align-items: center;
  justify-content: center;
  border-radius: 4px;
  position: relative;
}

.app.teams svg {
  margin-left: 7px;
}

.on-x {
  background: #edf3fb;
  width: 48px;
  margin: 0 3px 0 4px;
}

.on-c {
  background: #fbe3e6;
  width: 50px;
  margin-left: 3px;
}

.on-c svg {
  margin-left: 3px;
}

.run {
  position: absolute;
  bottom: 1px;
  height: 3px;
  border-radius: 2px;
  left: 50%;
}

.run.blue {
  width: 20px;
  margin-left: -10px;
  background: #0f78d4;
}

.run.red {
  width: 6px;
  margin-left: -3px;
  background: #d32f2f;
}

.dot {
  position: absolute;
  bottom: 4px;
  width: 6px;
  height: 4px;
  border-radius: 2px;
  background: #7d8794;
}

.d-folder { left: 190px; }
.d-teams { left: 355px; }

.tray {
  margin-left: auto;
  height: 100%;
  display: flex;
  align-items: center;
  padding-right: 25px;
}

.clock {
  width: 77px;
  text-align: right;
  line-height: 20px;
  font-size: 14.500px;
  color: #222;
  margin-bottom: 2px;
  white-space: nowrap;
}

.badge {
  width: 20px;
  height: 20px;
  margin-left: 9px;
  border-radius: 50%;
  background: #0067c0;
  color: #fff;
  font-size: 12px;
  display: flex;
  align-items: center;
  justify-content: center;
}
```
